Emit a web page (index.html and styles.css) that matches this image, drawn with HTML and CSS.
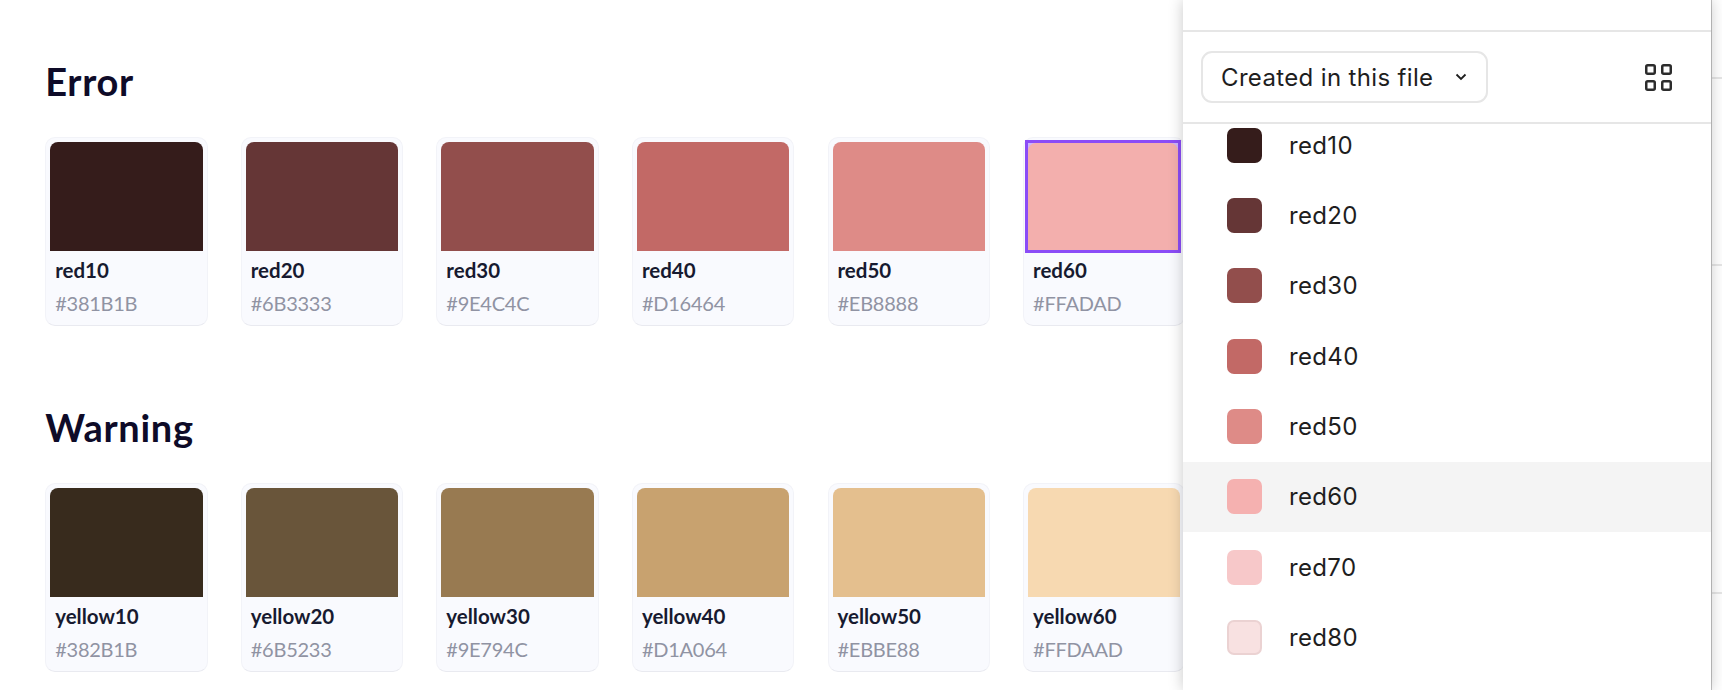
FILE: index.html
```html
<!DOCTYPE html>
<html>
    <head>
        <meta charset="utf-8">
        <title>Colors</title>
        <link rel="stylesheet" href="styles.css">
    </head>
    <body>
        <div id="wrapper">
            <div class="main">
                <section class="group">
                    <h2 class="group-title">Error</h2>
                    <div class="cards">
                        <div class="card"><div class="swatch c-red10"></div><div class="name">red10</div><div class="hex">#381B1B</div></div>
                        <div class="card"><div class="swatch c-red20"></div><div class="name">red20</div><div class="hex">#6B3333</div></div>
                        <div class="card"><div class="swatch c-red30"></div><div class="name">red30</div><div class="hex">#9E4C4C</div></div>
                        <div class="card"><div class="swatch c-red40"></div><div class="name">red40</div><div class="hex">#D16464</div></div>
                        <div class="card"><div class="swatch c-red50"></div><div class="name">red50</div><div class="hex">#EB8888</div></div>
                        <div class="card"><div class="selected"><div class="swatch c-red60"></div></div><div class="name">red60</div><div class="hex">#FFADAD</div></div>
                    </div>
                </section>
                <section class="group">
                    <h2 class="group-title">Warning</h2>
                    <div class="cards">
                        <div class="card"><div class="swatch c-yellow10"></div><div class="name">yellow10</div><div class="hex">#382B1B</div></div>
                        <div class="card"><div class="swatch c-yellow20"></div><div class="name">yellow20</div><div class="hex">#6B5233</div></div>
                        <div class="card"><div class="swatch c-yellow30"></div><div class="name">yellow30</div><div class="hex">#9E794C</div></div>
                        <div class="card"><div class="swatch c-yellow40"></div><div class="name">yellow40</div><div class="hex">#D1A064</div></div>
                        <div class="card"><div class="swatch c-yellow50"></div><div class="name">yellow50</div><div class="hex">#EBBE88</div></div>
                        <div class="card"><div class="swatch c-yellow60"></div><div class="name">yellow60</div><div class="hex">#FFDAAD</div></div>
                    </div>
                </section>
            </div>

            <!-- what shows of the canvas to the right of the panel -->
            <div class="strip">
                <div class="strip-row a"></div>
                <div class="strip-row b"></div>
                <div class="strip-row c"></div>
            </div>

            <div class="panel">
                <div class="panel-top"></div>
                <div class="panel-bar">
                    <div class="dropdown">
                        <span>Created in this file</span>
                        <svg class="chevron" width="12" height="8" viewBox="0 0 12 8"><polyline points="1.5,1.5 6,6 10.5,1.5" fill="none" stroke="#1e1e1e" stroke-width="1.8"/></svg>
                    </div>
                    <svg class="grid-icon" width="27" height="27" viewBox="0 0 27 27">
                        <rect x="1.25" y="1.25" width="8.5" height="8.5" rx="1.5"/>
                        <rect x="17.25" y="1.25" width="8.5" height="8.5" rx="1.5"/>
                        <rect x="1.25" y="17.25" width="8.5" height="8.5" rx="1.5"/>
                        <rect x="17.25" y="17.25" width="8.5" height="8.5" rx="1.5"/>
                    </svg>
                </div>
                <div class="list-clip">
                    <div class="list">
                        <div class="row"><div class="dot l-red10"></div>red10</div>
                        <div class="row"><div class="dot l-red20"></div>red20</div>
                        <div class="row"><div class="dot l-red30"></div>red30</div>
                        <div class="row"><div class="dot l-red40"></div>red40</div>
                        <div class="row"><div class="dot l-red50"></div>red50</div>
                        <div class="row hover"><div class="dot l-red60"></div>red60</div>
                        <div class="row"><div class="dot l-red70"></div>red70</div>
                        <div class="row"><div class="dot l-red80"></div>red80</div>
                    </div>
                </div>
            </div>
        </div>
    </body>
</html>
```

FILE: styles.css
```css
body { margin:0; }
#wrapper {
    position: relative;
    width: 1722px;
    height: 690px;
    overflow: hidden;
    background: #fff;
}

.main {
    padding: 59px 0 0 45.2px;
}
.group {
    height: 346px;
}
.group-title {
    margin: 0 0 34px 0;
    font-family: "Lato", sans-serif;
    font-size: 38px;
    line-height: 44px;
    font-weight: 700;
    letter-spacing: .7px;
    color: #0e0b28;
}
.cards {
    display: flex;
    gap: 33.2px;
}
.card {
    box-sizing: border-box;
    width: 162.4px;
    height: 189px;
    padding: 4px 4px 0 4px;
    background: #f9fafe;
    border: 1px solid #f2f3f8;
    border-bottom-color: #e9eaf0;
    border-radius: 10px;
    font-family: "Lato", sans-serif;
}
.swatch {
    height: 109px;
    border-radius: 8px 8px 0 0;
}
.selected {
    height: 107px;
    margin: -2px -1px -2px -3px;
    border: 3px solid #8b4cf7;
    background: #cdb5fb;
}
.selected .swatch {
    height: 107px;
}
.name {
    margin-top: 6px;
    padding-left: 5px;
    font-size: 20.5px;
    line-height: 26px;
    font-weight: 700;
    color: #171a30;
}
.hex {
    margin-top: 7px;
    padding-left: 5px;
    font-size: 20px;
    line-height: 26px;
    letter-spacing: -.25px;
    color: #9093a3;
}

.c-red10 { background: #351c1b; }
.c-red20 { background: #653636; }
.c-red30 { background: #924e4c; }
.c-red40 { background: #c26966; }
.c-red50 { background: #de8b87; }
.c-red60 { background: #f3afad; }
.c-yellow10 { background: #382b1d; }
.c-yellow20 { background: #69553a; }
.c-yellow30 { background: #987a51; }
.c-yellow40 { background: #c8a26f; }
.c-yellow50 { background: #e4bf8e; }
.c-yellow60 { background: #f7d9b1; }

.strip {
    position: absolute;
    top: 0;
    right: 0;
    width: 11px;
    height: 100%;
}
.strip-row {
    border-bottom: 2px solid #e6e6e6;
}
.strip-row.a { height: 77px; }
.strip-row.b { height: 185px; }
.strip-row.c { height: 326px; }

.panel {
    position: absolute;
    top: 0;
    left: 1183px;
    bottom: 0;
    width: 528px;
    display: flex;
    flex-direction: column;
    background: #fff;
    box-shadow: 0 0 14px rgba(0,0,0,.22), 1px 0 0 #c6c6c6;
    font-family: "Inter", sans-serif;
    color: #1e1e1e;
}
.panel-top {
    height: 30px;
    flex: none;
    border-bottom: 2px solid #e6e6e6;
}
.panel-bar {
    height: 90px;
    flex: none;
    display: flex;
    align-items: center;
    justify-content: space-between;
    padding: 0 39px 0 18px;
    border-bottom: 2px solid #e6e6e6;
}
.dropdown {
    box-sizing: border-box;
    width: 287px;
    height: 52px;
    display: flex;
    align-items: center;
    justify-content: space-between;
    padding: 0 19px 0 18px;
    border: 2px solid #e6e6e6;
    border-radius: 11px;
    font-size: 24px;
    letter-spacing: .35px;
}
.grid-icon rect {
    fill: none;
    stroke: #2c2c2c;
    stroke-width: 2.5;
}
.list-clip {
    flex: 1;
    overflow: hidden;
}
.list {
    margin-top: -14.2px;
}
.row {
    height: 70.4px;
    display: flex;
    align-items: center;
    padding-left: 44px;
    font-size: 24px;
    letter-spacing: .35px;
}
.row.hover {
    background: #f4f4f4;
}
.dot {
    box-sizing: border-box;
    width: 35px;
    height: 35px;
    margin-right: 27px;
    border-radius: 7px;
}
.l-red10 { background: #351c1b; }
.l-red20 { background: #653636; }
.l-red30 { background: #924e4c; }
.l-red40 { background: #c26966; }
.l-red50 { background: #de8b87; }
.l-red60 { background: #f5b1b0; }
.l-red70 { background: #f7c8c9; }
.l-red80 { background: #f8e1e1; border: 2px solid #ebd2d2; }
```
